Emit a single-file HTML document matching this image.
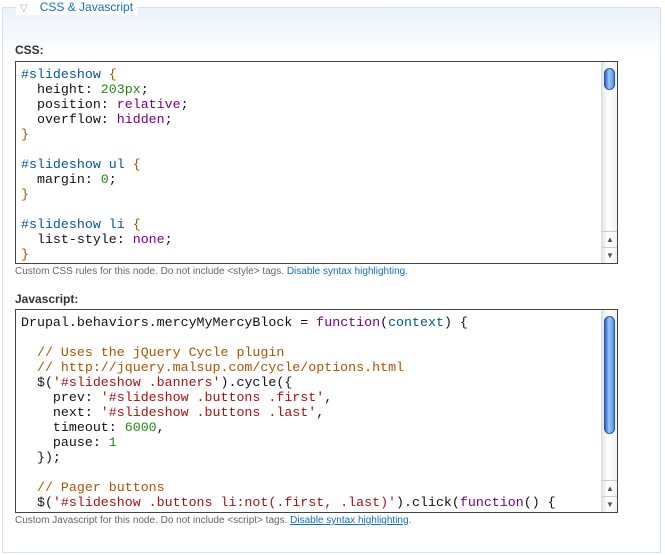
<!DOCTYPE html>
<html><head><style>
*{margin:0;padding:0;box-sizing:border-box}
body{width:665px;height:555px;background:#fff;position:relative;overflow:hidden;font-family:"Liberation Sans",sans-serif}
.fs{position:absolute;left:2px;top:7px;width:659px;height:546px;border:1px solid #d5e3f0;background:linear-gradient(#eaf2fa 0,#fff 50px,#fff)}
.leg{position:absolute;left:14px;top:0;background:#fff;padding:0 4px;font-size:12px;color:#0f6fc6;line-height:13px}
.leg span{color:#aaa;font-size:10px;margin-right:12px}
.lbl{position:absolute;left:15px;font-weight:bold;font-size:12px;color:#333}
.box{position:absolute;left:15px;width:603px;border:1px solid #444;background:#fff;overflow:hidden}
pre{font-family:"Liberation Mono",monospace;font-size:13.3px;line-height:15px;padding:5px 0 0 5px;color:#111;font-weight:normal}
.sb{position:absolute;right:0;top:0;width:16px;height:100%;background:linear-gradient(90deg,#e4e4e4,#fff 40%,#f0f0f0);border-left:1px solid #ddd}
.th{position:absolute;left:2px;top:6px;width:11px;height:22px;border-radius:6px;background:linear-gradient(90deg,#2a60c8,#9cc8f8 45%,#4f8ee6);border:1px solid #2a55a8}
.ar{position:absolute;left:0;width:16px;height:16px;font-size:8px;color:#555;text-align:center;line-height:16px;border-top:1px solid #ccc}
.cap{position:absolute;left:15px;font-size:10px;color:#666}
.cap a{color:#0f6fc6;text-decoration:none}
.s{color:#05a}.k{color:#708}.b{color:#a50}.c{color:#a50}.r{color:#a11}.v{color:#05a}.g{color:#281}
</style></head><body>
<div class="fs"></div>
<div class="leg" style="left:16px;top:1px"><span>▽</span>CSS &amp; Javascript</div>
<div class="lbl" style="top:43px">CSS:</div>
<div class="box" style="top:61px;height:203px">
<pre><span class="s">#slideshow</span> <span class="b">{</span>
  height: <span class="g">203px</span>;
  position: <span class="k">relative</span>;
  overflow: <span class="k">hidden</span>;
<span class="b">}</span>

<span class="s">#slideshow ul</span> <span class="b">{</span>
  margin: <span class="g">0</span>;
<span class="b">}</span>

<span class="s">#slideshow li</span> <span class="b">{</span>
  list-style: <span class="k">none</span>;
<span class="b">}</span></pre>
<div class="sb"><div class="th"></div><div class="ar" style="top:169px">▲</div><div class="ar" style="top:185px">▼</div></div>
</div>
<div class="cap" style="top:266px">Custom CSS rules for this node. Do not include &lt;style&gt; tags. <a>Disable syntax highlighting</a>.</div>
<div class="lbl" style="top:292px">Javascript:</div>
<div class="box" style="top:309px;height:204px">
<pre>Drupal.behaviors.mercyMyMercyBlock = <span class="k">function</span>(<span class="v">context</span>) {

  <span class="c">// Uses the jQuery Cycle plugin</span>
  <span class="c">// http://jquery.malsup.com/cycle/options.html</span>
  $(<span class="r">'#slideshow .banners'</span>).cycle({
    prev: <span class="r">'#slideshow .buttons .first'</span>,
    next: <span class="r">'#slideshow .buttons .last'</span>,
    timeout: <span class="g">6000</span>,
    pause: <span class="g">1</span>
  });

  <span class="c">// Pager buttons</span>
  $(<span class="r">'#slideshow .buttons li:not(.first, .last)'</span>).click(<span class="k">function</span>() {</pre>
<div class="sb"><div class="th" style="height:118px"></div><div class="ar" style="top:170px">▲</div><div class="ar" style="top:186px">▼</div></div>
</div>
<div class="cap" style="top:515px">Custom Javascript for this node. Do not include &lt;script&gt; tags. <a style="text-decoration:underline">Disable syntax highlighting</a>.</div>
</body></html>
